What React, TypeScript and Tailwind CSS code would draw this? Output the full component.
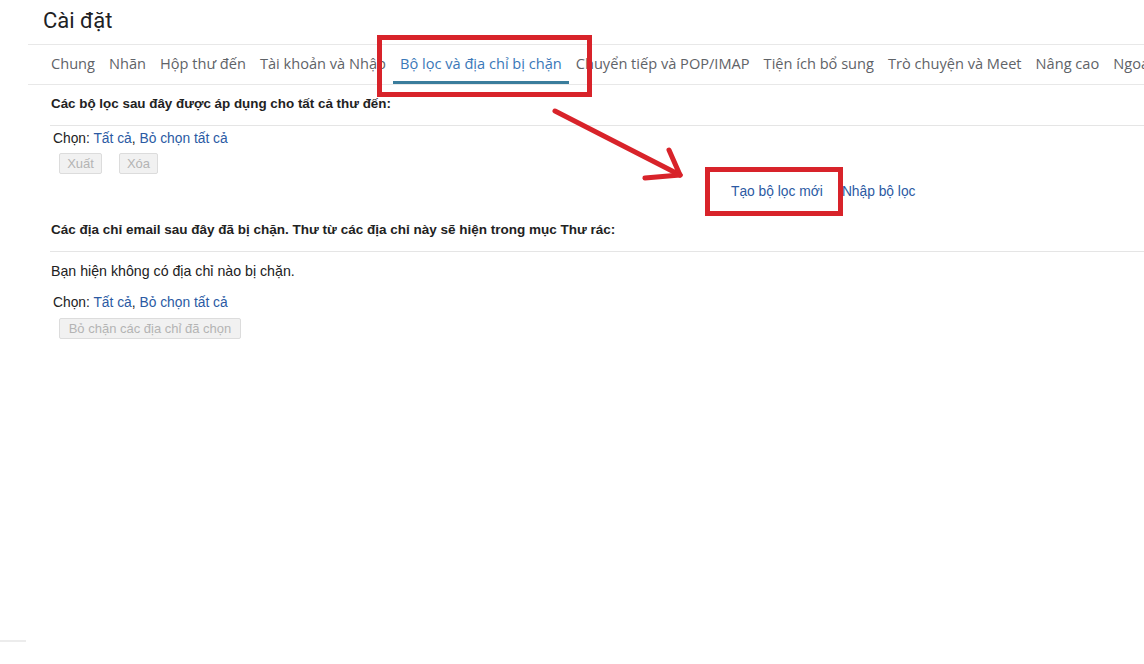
import React from "react";

const tabs = [
  "Chung",
  "Nhãn",
  "Hộp thư đến",
  "Tài khoản và Nhập",
  "Bộ lọc và địa chỉ bị chặn",
  "Chuyển tiếp và POP/IMAP",
  "Tiện ích bổ sung",
  "Trò chuyện và Meet",
  "Nâng cao",
  "Ngoại tuyến",
];

function Btn({ children, w }: { children: React.ReactNode; w: string }) {
  return (
    <div
      className={`h-[21px] ${w} flex items-center justify-center rounded-[2px] border border-[#dcdcdc] bg-[#f1f1f1] text-[13px] text-[#b4b4b4]`}
    >
      {children}
    </div>
  );
}

function Select() {
  return (
    <div className="text-[13.8px] text-[#222] leading-[16px]">
      Chọn: <span className="text-[#2b5aa3]">Tất cả</span>,{" "}
      <span className="text-[#2b5aa3]">Bỏ chọn tất cả</span>
    </div>
  );
}

export default function App() {
  return (
    <div
      className="relative h-[664px] w-[1144px] overflow-hidden bg-white"
      style={{ fontFamily: '"Liberation Sans", Arial, sans-serif' }}
    >
      <div
        className="h-[44px] pl-[43px] pt-[7px] text-[22px] leading-[28px] text-[#202124]"
        style={{ fontFamily: "Roboto, sans-serif" }}
      >
        Cài đặt
      </div>
      <div
        className="ml-[28px] flex h-[41px] whitespace-nowrap border-y border-[#e8e8e8] pl-[16px] text-[14.6px] text-[#5f6368]"
        style={{ fontFamily: '"Open Sans", sans-serif' }}
      >
        {tabs.map((t) => {
          const active = t === "Bộ lọc và địa chỉ bị chặn";
          return (
            <div
              key={t}
              className={`relative flex items-center px-[7px] pb-[1px] ${active ? "text-[#3b78b8]" : ""}`}
            >
              {t}
              {active && (
                <div className="absolute bottom-0 left-0 right-0 h-[3px] bg-[#3a7d9c]" />
              )}
            </div>
          );
        })}
      </div>

      <div className="pl-[51px]">
        <div className="mt-[11px] text-[13.4px] font-bold leading-[16px] text-[#222]">
          Các bộ lọc sau đây được áp dụng cho tất cả thư đến:
        </div>
        <div className="mt-[13px] -ml-[1px] border-t border-[#e5e5e5]" />
        <div className="mt-[5px] pl-[2px]">
          <Select />
        </div>
        <div className="mt-[6px] flex gap-[17px] pl-[8px]">
          <Btn w="w-[43px]">Xuất</Btn>
          <Btn w="w-[39px]">Xóa</Btn>
        </div>
        <div className="mt-[10px] flex pl-[680px] text-[13.8px] leading-[16px] text-[#2b5aa3]">
          <span>Tạo bộ lọc mới</span>
          <span className="ml-[19px]">Nhập bộ lọc</span>
        </div>
        <div className="mt-[22px] text-[13.5px] font-bold leading-[16px] text-[#222]">
          Các địa chỉ email sau đây đã bị chặn. Thư từ các địa chỉ này sẽ hiện trong mục Thư rác:
        </div>
        <div className="mt-[13px] -ml-[1px] border-t border-[#e5e5e5]" />
        <div className="mt-[11px] text-[14.2px] leading-[16px] text-[#222]">
          Bạn hiện không có địa chỉ nào bị chặn.
        </div>
        <div className="mt-[16px] pl-[2px]">
          <Select />
        </div>
        <div className="mt-[7px] pl-[8px]">
          <Btn w="w-[182px]">Bỏ chặn các địa chỉ đã chọn</Btn>
        </div>
      </div>

      <div className="absolute left-0 top-[640px] h-[2px] w-[26px] bg-[#ececec]" />

      {/* annotations */}
      <div className="absolute left-[377px] top-[35px] h-[62px] w-[215px] border-[5px] border-[#d8232a]" />
      <div className="absolute left-[705px] top-[167px] h-[49px] w-[138px] border-[5px] border-[#d8232a]" />
      <svg className="absolute left-0 top-0" width="1144" height="664">
        <g stroke="#d8232a" strokeWidth="5" strokeLinecap="round" fill="none">
          <line x1="555" y1="111" x2="680" y2="175" />
          <line x1="669" y1="150" x2="680" y2="175" />
          <line x1="645" y1="178" x2="680" y2="175" />
        </g>
      </svg>
    </div>
  );
}
